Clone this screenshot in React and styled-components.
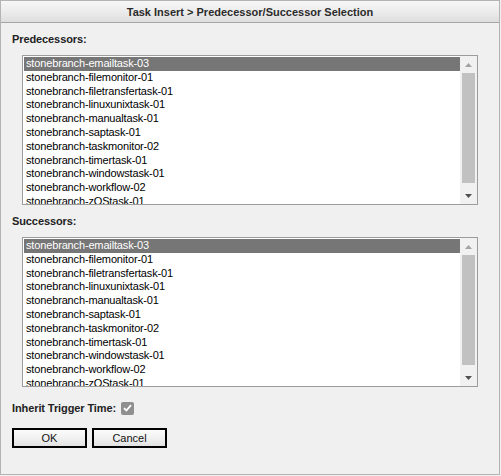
import React from 'react';
import styled, { createGlobalStyle } from 'styled-components';

const GlobalStyle = createGlobalStyle`
  html, body {
    margin: 0;
    padding: 0;
    background: #f0f0f0;
  }
  body {
    font-family: "Liberation Sans", Arial, sans-serif;
  }
`;

const Dialog = styled.div`
  box-sizing: border-box;
  width: 500px;
  height: 475px;
  border: 1px solid #b4b4b4;
  background: #f0f0f0;
  display: flex;
  flex-direction: column;
`;

const TitleBar = styled.div`
  height: 21px;
  border-bottom: 1px solid #a6a6a6;
  background: linear-gradient(to bottom, #f7f7f7 0%, #ececec 50%, #dedede 100%);
  display: flex;
  align-items: center;
  justify-content: center;
  font-size: 11px;
  font-weight: bold;
  color: #2b2b2b;
`;

const Body = styled.div`
  padding: 10px 11px 0 11px;
  display: flex;
  flex-direction: column;
`;

const Label = styled.div`
  font-size: 11px;
  font-weight: bold;
  line-height: 13px;
  height: 13px;
  color: #222;
  letter-spacing: -0.1px;
  margin-top: ${(p) => p.$top || 0}px;
`;

const ListBox = styled.div`
  box-sizing: border-box;
  width: 456px;
  height: 150px;
  margin: 9px 0 0 10px;
  border: 1px solid #9c9c9c;
  background: #fff;
  display: flex;
`;

const Items = styled.div`
  flex: 1;
  padding: 1px 0 0 1px;
  overflow: hidden;
`;

const Item = styled.div`
  height: 13.8px;
  line-height: 13.8px;
  padding-left: 2px;
  font-size: 11px;
  letter-spacing: -0.15px;
  white-space: nowrap;
  color: ${(p) => (p.$selected ? '#fff' : '#000')};
  background: ${(p) => (p.$selected ? '#767676' : 'transparent')};
`;

const ScrollBar = styled.div`
  width: 17px;
  background: #f1f1f1;
  display: flex;
  flex-direction: column;
`;

const ArrowButton = styled.div`
  height: 17px;
  display: flex;
  align-items: center;
  justify-content: center;
`;

const Track = styled.div`
  flex: 1;
  padding: 0 2px;
  display: flex;
  flex-direction: column;
`;

const Thumb = styled.div`
  height: 110px;
  background: #c1c1c1;
`;

const InheritRow = styled.div`
  margin-top: 14px;
  height: 14px;
  display: flex;
  align-items: center;
  gap: 5px;
`;

const CheckBox = styled.span`
  box-sizing: border-box;
  width: 13px;
  height: 13px;
  border-radius: 2px;
  background: #8f8f8f;
  display: flex;
  align-items: center;
  justify-content: center;
`;

const ButtonRow = styled.div`
  margin-top: 13px;
  display: flex;
  gap: 5px;
`;

const Button = styled.button`
  box-sizing: border-box;
  width: 75px;
  height: 20px;
  padding: 0;
  border: 2px solid #000;
  border-radius: 0;
  background: linear-gradient(to bottom, #fbfbfb 0%, #f1f1f1 50%, #e2e2e2 100%);
  font-family: "Liberation Sans", Arial, sans-serif;
  font-size: 11px;
  color: #111;
`;

const tasks = [
  'stonebranch-emailtask-03',
  'stonebranch-filemonitor-01',
  'stonebranch-filetransfertask-01',
  'stonebranch-linuxunixtask-01',
  'stonebranch-manualtask-01',
  'stonebranch-saptask-01',
  'stonebranch-taskmonitor-02',
  'stonebranch-timertask-01',
  'stonebranch-windowstask-01',
  'stonebranch-workflow-02',
  'stonebranch-zOStask-01',
];

const TaskList = () => (
  <ListBox>
    <Items>
      {tasks.map((t, i) => (
        <Item key={t} $selected={i === 0}>
          {t}
        </Item>
      ))}
    </Items>
    <ScrollBar>
      <ArrowButton>
        <svg width="7" height="4" viewBox="0 0 7 4">
          <path d="M3.5 0 L7 4 L0 4 Z" fill="#a3a3a3" />
        </svg>
      </ArrowButton>
      <Track>
        <Thumb />
      </Track>
      <ArrowButton>
        <svg width="7" height="4" viewBox="0 0 7 4">
          <path d="M0 0 L7 0 L3.5 4 Z" fill="#505050" />
        </svg>
      </ArrowButton>
    </ScrollBar>
  </ListBox>
);

export default function App() {
  return (
    <>
      <GlobalStyle />
      <Dialog>
        <TitleBar>Task Insert &gt; Predecessor/Successor Selection</TitleBar>
        <Body>
          <Label>Predecessors:</Label>
          <TaskList />
          <Label $top={10}>Successors:</Label>
          <TaskList />
          <InheritRow>
            <Label>Inherit Trigger Time:</Label>
            <CheckBox>
              <svg width="9" height="8" viewBox="0 0 9 8">
                <path d="M1 4.2 L3.4 6.5 L8 1.2" stroke="#fff" strokeWidth="1.8" fill="none" />
              </svg>
            </CheckBox>
          </InheritRow>
          <ButtonRow>
            <Button>OK</Button>
            <Button>Cancel</Button>
          </ButtonRow>
        </Body>
      </Dialog>
    </>
  );
}
